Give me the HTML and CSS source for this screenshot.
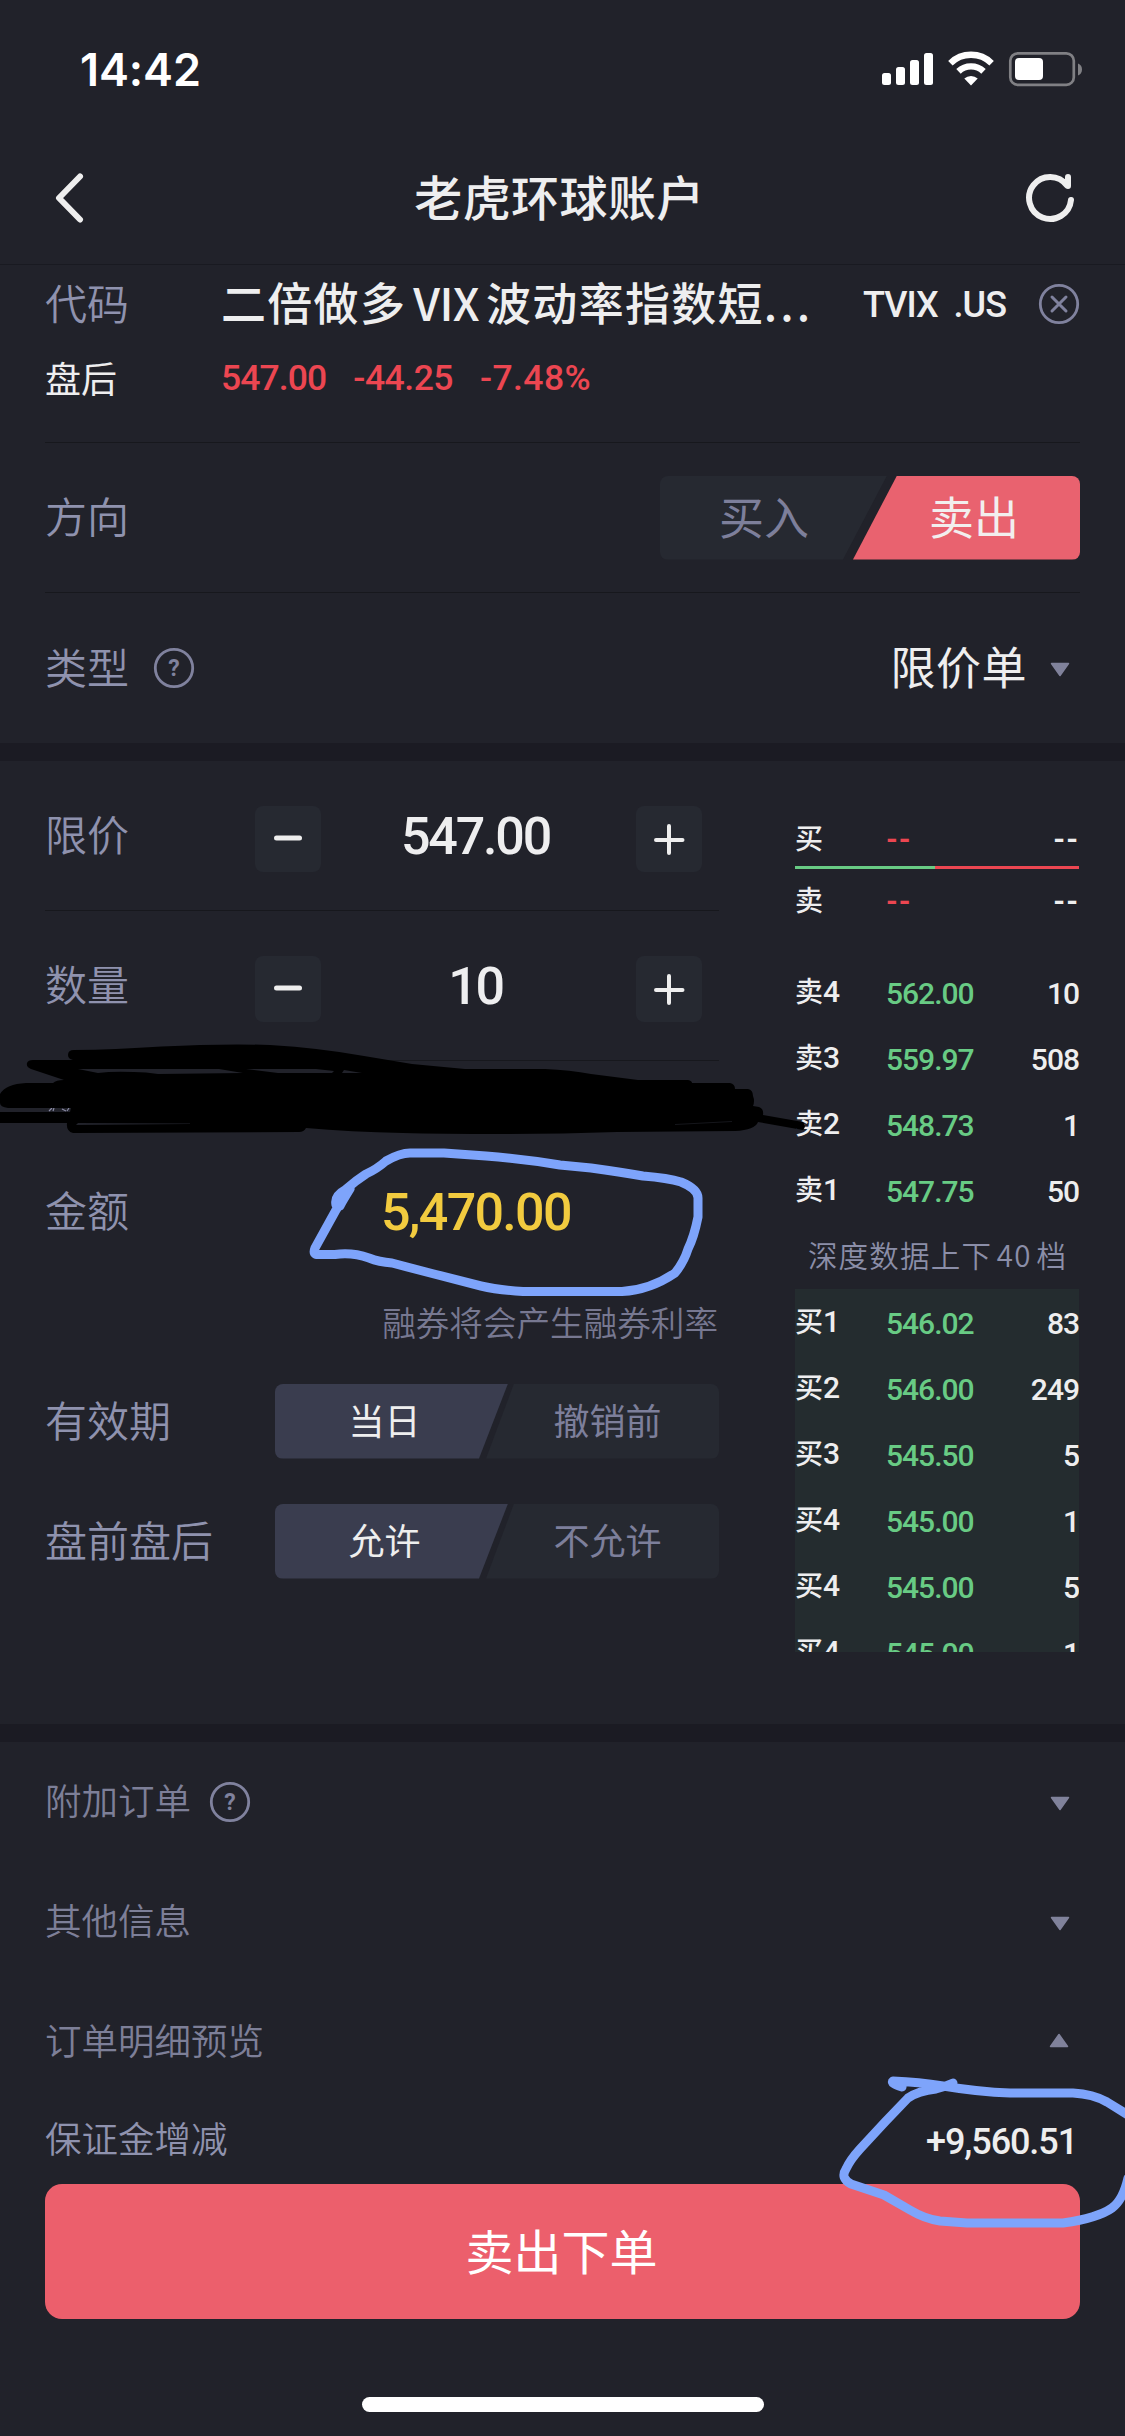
FILE: index.html
```html
<!DOCTYPE html>
<html lang="zh-CN">
<head>
<meta charset="utf-8">
<title>老虎环球账户</title>
<link rel="stylesheet" href="styles.css">
</head>
<body>
<div class="screen">
  <div class="status">
    <span class="time">14:42</span>
    <svg class="status-icons" width="202" height="36" viewBox="0 0 202 36">
      <g fill="#fff">
        <rect x="2" y="22" width="9" height="12" rx="2.5"/>
        <rect x="16" y="16" width="9" height="18" rx="2.5"/>
        <rect x="30" y="9" width="9" height="25" rx="2.5"/>
        <rect x="44" y="2" width="9" height="32" rx="2.5"/>
      </g>
      <g fill="none" stroke="#fff" stroke-width="6.4">
        <path d="M70.4 12.2A29.5 29.5 0 0 1 111.600 12.200"/>
        <path d="M78.500 20.400A18 18 0 0 1 103.500 20.400"/>
      </g>
      <path d="M91 34.500L84.300 27.600A9.600 9.600 0 0 1 97.700 27.600Z" fill="#fff"/>
      <rect x="130.300" y="2.300" width="63.500" height="31.500" rx="7.500" fill="none" stroke="#808084" stroke-width="2.700"/>
      <path d="M198 12.500a6.500 6.500 0 0 1 0 12Z" fill="#808084"/>
      <rect x="135" y="7" width="28" height="22" rx="4" fill="#fff"/>
    </svg>
  </div>
  <div class="header">
    <svg class="back" width="32" height="50" viewBox="0 0 32 50"><path d="M26 3.500L5 25L26 46.500"/></svg>
    <h1 class="zh">老虎环球账户</h1>
    <svg class="refresh" width="50" height="50" viewBox="0 0 50 50"><path d="M46 27A21 21 0 1 1 42 12.500M43 4V13"/></svg>
  </div>

  <div class="block">
    <div class="row code-row">
      <span class="label zh">代码</span>
      <span class="name zh">二倍做多 <em>VIX</em> 波动率指数短<span class="dots">...</span></span>
      <span class="num ticker">TVIX&nbsp; .US</span>
      <svg class="clear" width="42" height="42" viewBox="0 0 42 42"><circle cx="21" cy="21" r="18.700"/><path d="M14 14L28 28M28 14L14 28"/></svg>
    </div>
    <div class="row quote-row">
      <span class="session zh">盘后</span>
      <span class="num change">547.00</span><span class="num change c2">-44.25</span><span class="num change c3">-7.48%</span>
    </div>
    <div class="row line side-row">
      <span class="label zh">方向</span>
      <div class="seg side">
        <span class="opt first"><span class="zh">买入</span></span>
        <span class="opt last on"><span class="zh">卖出</span></span>
      </div>
    </div>
    <div class="row line type-row">
      <span class="label zh">类型</span>
      <svg class="help" width="42" height="42" viewBox="0 0 42 42"><circle cx="21" cy="21" r="18.700"/><text x="21" y="29" text-anchor="middle">?</text></svg>
      <span class="value zh">限价单</span>
      <svg class="tri" width="20" height="15" viewBox="0 0 20 15"><path d="M1.500 1.500H18.500L10 13.500Z"/></svg>
    </div>
  </div>

  <div class="trade">
    <div class="form">
      <div class="field">
        <span class="label zh">限价</span>
        <div class="stepper">
          <span class="btn"><svg width="32" height="32" viewBox="0 0 32 32"><path d="M4.500 15H27.500"/></svg></span>
          <span class="num big">547.00</span>
          <span class="btn"><svg width="32" height="32" viewBox="0 0 32 32"><path d="M3 17H29.500M16 3V30" class="thin"/></svg></span>
        </div>
      </div>
      <div class="field line">
        <span class="label zh">数量</span>
        <div class="stepper">
          <span class="btn"><svg width="32" height="32" viewBox="0 0 32 32"><path d="M4.500 15H27.500"/></svg></span>
          <span class="num big">10</span>
          <span class="btn"><svg width="32" height="32" viewBox="0 0 32 32"><path d="M3 17H29.500M16 3V30" class="thin"/></svg></span>
        </div>
      </div>
      <div class="field line spacer"></div>
      <div class="field amount"><span class="label zh">金额</span><span class="num big total">5,470.00</span></div>
      <div class="hint"><span class="zh">融券将会产生融券利率</span></div>
      <div class="field opts">
        <span class="label zh">有效期</span>
        <div class="seg small">
          <span class="opt first on"><span class="zh">当日</span></span>
          <span class="opt last"><span class="zh">撤销前</span></span>
        </div>
      </div>
      <div class="field opts">
        <span class="label zh">盘前盘后</span>
        <div class="seg small">
          <span class="opt first on"><span class="zh">允许</span></span>
          <span class="opt last"><span class="zh">不允许</span></span>
        </div>
      </div>
    </div>

    <div class="book">
      <div class="level best"><span class="tag zh">买</span><span class="dash red">--</span><span class="dash qty">--</span></div>
      <div class="ratio"><i></i><i></i></div>
      <div class="level best ask"><span class="tag zh">卖</span><span class="dash red">--</span><span class="dash qty">--</span></div>
      <div class="asks">
        <div class="level"><span class="tag zh">卖<b>4</b></span><span class="num">562.00</span><span class="num qty">10</span></div>
        <div class="level"><span class="tag zh">卖<b>3</b></span><span class="num">559.97</span><span class="num qty">508</span></div>
        <div class="level"><span class="tag zh">卖<b>2</b></span><span class="num">548.73</span><span class="num qty">1</span></div>
        <div class="level"><span class="tag zh">卖<b>1</b></span><span class="num">547.75</span><span class="num qty">50</span></div>
      </div>
      <div class="depth"><span class="zh">深度数据上下 40 档</span></div>
      <div class="bids">
        <div class="level"><span class="tag zh">买<b>1</b></span><span class="num">546.02</span><span class="num qty">83</span></div>
        <div class="level"><span class="tag zh">买<b>2</b></span><span class="num">546.00</span><span class="num qty">249</span></div>
        <div class="level"><span class="tag zh">买<b>3</b></span><span class="num">545.50</span><span class="num qty">5</span></div>
        <div class="level"><span class="tag zh">买<b>4</b></span><span class="num">545.00</span><span class="num qty">1</span></div>
        <div class="level"><span class="tag zh">买<b>4</b></span><span class="num">545.00</span><span class="num qty">5</span></div>
        <div class="level"><span class="tag zh">买<b>4</b></span><span class="num">545.00</span><span class="num qty">1</span></div>
      </div>
    </div>
  </div>

  <div class="extras">
    <div class="fold"><span class="zh">附加订单</span>
      <svg class="help" width="42" height="42" viewBox="0 0 42 42"><circle cx="21" cy="21" r="18.700"/><text x="21" y="29" text-anchor="middle">?</text></svg>
      <svg class="tri" width="20" height="15" viewBox="0 0 20 15"><path d="M1.500 1.500H18.500L10 13.500Z"/></svg></div>
    <div class="fold"><span class="zh">其他信息</span><svg class="tri" width="20" height="15" viewBox="0 0 20 15"><path d="M1.500 1.500H18.500L10 13.500Z"/></svg></div>
    <div class="fold"><span class="zh">订单明细预览</span><svg class="tri up" width="20" height="15" viewBox="0 0 20 15"><path d="M1.500 13.500H18.500L10 1.500Z"/></svg></div>
    <div class="margin-row"><span class="zh">保证金增减</span><span class="num">+9,560.51</span></div>
  </div>
  <div class="submit"><span class="zh">卖出下单</span></div>
  <div class="home"></div>

  <svg class="ink" width="1125" height="2436" viewBox="0 0 1125 2436">
    <path d="M49 1111l3-3M53 1111l1-3M62 1109l4 2M69 1108l-2 3" stroke="#8b8ca6" stroke-width="1.200" fill="none"/>
    <path fill="#000" d="M74 1050Q95 1050 116 1049Q165 1046 200 1045Q240 1044 270 1045Q320 1048 364 1056L412 1064L465 1069L545 1069Q570 1070 591 1074L638 1080L688 1080Q692 1081 692 1083L730 1083Q735 1084 735 1089L748 1089Q753 1090 753 1096Q755 1101 753 1106L759 1107Q764 1109 763 1115L803 1122Q807 1126 803 1130L758 1122Q755 1130 735 1131L617 1132Q560 1134 502 1134Q440 1134 403 1133Q350 1132 306 1128Q304 1132 299 1132L73 1133Q66 1131 67 1123L0 1123V1112L70 1112L71 1108L8 1108Q0 1107 0 1103V1094Q6 1084 26 1083L53 1083Q56 1080 64 1080L31 1069Q26 1067 27 1063Q28 1060 33 1060L73 1060Q68 1059 68 1055Q68 1050 74 1050Z"/>
    <path fill="#21222a" d="M78 1069L219 1069L243 1073L158 1074Q146 1072 134 1072Q113 1071 98 1073ZM246 1069L316 1069L334 1071L332 1073L278 1073ZM344 1070L362 1073L342 1073ZM78 1123L190 1123.500L190 1124L76 1125Z"/>
    <path d="M675 1124.500L732 1121.500" stroke="#15161b" fill="none"/>
    <g fill="none" stroke="#7ea4fb" stroke-width="9" stroke-linecap="round" stroke-linejoin="round">
      <path d="M336 1205Q334 1196 345 1190L356 1181L366 1174Q377 1169 386 1161Q400 1153 410 1153L444 1153L486 1156Q525 1159 560 1165L591 1168Q620 1172 643 1176Q668 1178 681 1182Q698 1189 698 1198L698 1217Q694 1237 688 1249Q684 1262 675 1273Q650 1290 622 1291.500L523 1291.500Q498 1290 481 1286L434 1274L392 1263Q379 1262 369 1258Q352 1252 335 1254.500L316 1254.500Q313 1253 315 1248L336 1210L350 1189Q342 1202 340 1206"/>
      <path d="M902 2087Q890 2083 893 2081Q919 2082 943 2086Q979 2092 1010 2093L1073 2093Q1093 2094 1107 2102L1128 2115M1128 2178Q1123 2200 1112 2208Q1098 2218 1063 2223L967 2223L940 2221Q925 2219 910 2210L884 2195L851 2184Q840 2178 846 2169Q850 2160 860 2149L885 2122L908 2098Q918 2091 936 2089Q944 2087 953 2083"/>
    </g>
  </svg>
</div>
</body>
</html>
```
FILE: styles.css
```css
* { box-sizing: border-box; }
body {
  margin: 0;
  background: #21222a;
  color: #eeeeef;
  font-family: "Noto Sans CJK SC", sans-serif;
}
.screen {
  position: relative;
  width: 1125px;
  height: 2436px;
  overflow: hidden;
  line-height: 1;
  white-space: nowrap;
}
svg { display: block; flex: none; }
/* optical centring of CJK glyphs inside flex rows */
.zh { margin-top: -0.11em; }
.num { font-family: Roboto, sans-serif; font-weight: 500; }

.status {
  display: flex;
  align-items: center;
  justify-content: space-between;
  height: 138px;
  padding: 0 43px 0 80px;
}
.time { font: 600 45px/1 Inter, sans-serif; color: #fff; letter-spacing: -0.1px; }

.header {
  display: flex;
  align-items: center;
  justify-content: space-between;
  height: 127px;
  padding: 0 50px 6px 54px;
  border-bottom: 1px solid #191a21;
}
.header h1 { font-size: 48px; font-weight: 500; letter-spacing: 0.4px; margin-bottom: 0; margin-left: 8px; }
.back path, .refresh path {
  fill: none; stroke: #eee; stroke-width: 6;
  stroke-linecap: round; stroke-linejoin: round;
}

.row { display: flex; align-items: center; margin: 0 45px; }
.label { font-size: 42px; font-weight: 350; color: #8f92ae; }
.line { border-top: 1px solid #17181d; }
.code-row { height: 78px; }
.name { width: 600px; margin-left: 92px; font-size: 45px; font-weight: 500; letter-spacing: 1.3px; word-spacing: -4.5px; }
.name em { font-style: normal; letter-spacing: -0.5px; }
.name .dots { letter-spacing: 3px; }
.ticker { width: 160px; margin-left: 42px; font-size: 36px; font-weight: 500; letter-spacing: -1px; padding-top: 2px; }
.clear { margin-left: auto; }
.clear circle, .help circle { fill: none; stroke: #80829e; stroke-width: 2.8; }
.clear path { stroke: #80829e; stroke-width: 3; stroke-linecap: round; }
.help text { fill: #80829e; font: 700 23px Roboto, sans-serif; }
.quote-row { height: 99px; padding-bottom: 27px; }
.session { font-size: 36px; width: 176px; }
.change { color: #ec4651; font-size: 35.5px; letter-spacing: -0.9px; }
.c2 { margin-left: 27px; letter-spacing: -0.5px; }
.c3 { margin-left: 27px; letter-spacing: 0.4px; }
.side-row { height: 150px; }
.type-row { height: 151px; }
.type-row .help { margin-left: 24px; }
.type-row .value { margin-left: auto; font-size: 45px; letter-spacing: 0.5px; }
.type-row .tri { margin: 3px 10px 0 23px; }
.tri path { fill: #80829b; stroke: #80829b; stroke-width: 1.5; stroke-linejoin: round; }

.seg { display: flex; margin-left: auto; color: #7d7f9b; }
.opt { display: flex; align-items: center; justify-content: center; background: #262931; }
.side { width: 420px; height: 84px; font-size: 45px; }
.side .first { width: 227px; padding-right: 19px; border-radius: 8px 0 0 8px; clip-path: polygon(0 0, 100% 0, 183px 100%, 0 100%); }
.side .last { width: 227px; margin-left: -34px; padding-left: 15px; border-radius: 0 8px 8px 0; clip-path: polygon(44px 0, 100% 0, 100% 100%, 0 100%); }
.side .on { background: #e9626f; color: #f2eeee; }
.small { width: 444px; height: 75px; font-size: 36px; }
.small .first { width: 233px; padding-right: 14px; border-radius: 8px 0 0 8px; clip-path: polygon(0 0, 100% 0, 204px 100%, 0 100%); }
.small .last { width: 233px; margin-left: -22px; padding-left: 10px; border-radius: 0 8px 8px 0; clip-path: polygon(28px 0, 100% 0, 100% 100%, 0 100%); }
.small .on { background: #3a3d4f; color: #eee; }

.trade {
  display: flex;
  justify-content: space-between;
  height: 999px;
  padding: 0 45px;
  border-top: 18px solid #1b1b23;
  border-bottom: 18px solid #1b1b23;
}
.form { width: 674px; }
.field { display: flex; align-items: center; height: 150px; }
.form .field:first-child { height: 149px; }
.stepper { display: flex; align-items: center; justify-content: space-between; width: 447px; margin: 0 17px 0 auto; }
.btn { display: flex; align-items: center; justify-content: center; width: 66px; height: 66px; margin-top: 7px; border-radius: 8px; background: #262931; }
.btn path { fill: none; stroke: #eee; stroke-width: 5; stroke-linecap: round; }
.btn .thin { stroke-width: 4; }
.big { padding-top: 3px; font-size: 52px; letter-spacing: -2.2px; }
.stepper .big { margin-right: 6px; }
.form .spacer { height: 76px; }
.form .amount .label { width: 336px; }
.form .total { color: #f2cb3f; letter-spacing: -1.7px; }
.hint { display: flex; align-items: center; justify-content: flex-end; height: 75px; padding-right: 1px; font-size: 33.600px; font-weight: 350; color: #777891; }
.form .opts { height: 120px; }

.book { width: 285px; padding-top: 49px; }
.level { display: flex; align-items: center; height: 66px; padding-right: 1px; font-size: 30px; }
.tag { width: 91px; padding-top: 1px; font-size: 28px; font-weight: 500; }
.tag b { font: 500 30px/1 Roboto, sans-serif; }
.level .num { padding-top: 2px; letter-spacing: -1px; color: #68cb84; }
.level .qty { margin-left: auto; color: #eee; }
.best { height: 56px; }
.ask { height: 62px; }
.dash { padding-top: 2px; font: 700 30px/1 Roboto, sans-serif; letter-spacing: 1px; }
.dash.red { color: #ec4651; }
.ratio { display: grid; grid-template-columns: 140px 1fr; height: 3px; margin-right: 1px; }
.ratio i { background: #68cb84; }
.ratio i + i { background: #ec4651; }
.asks { margin-top: 29px; }
.depth { display: flex; align-items: center; justify-content: center; height: 65px; font-size: 29.500px; font-weight: 350; letter-spacing: 1.2px; word-spacing: -3px; color: #8b8ea8; }
.bids { height: 363px; margin-right: 1px; padding-top: 1px; overflow: hidden; background: #242c2f; }
.bids .level { padding-right: 0; }

.fold, .margin-row { display: flex; align-items: center; height: 120px; padding: 0 55px 0 45px; font-size: 36.500px; font-weight: 350; color: #7d7f98; }
.fold .help { margin-left: 18px; }
.fold .tri { margin: 3px 0 0 auto; }
.fold .up { margin: -4px 1px 0 auto; }
.margin-row { height: 82px; padding: 0 48px 6px 45px; justify-content: space-between; color: #8f92ae; }
.margin-row .num { padding-top: 3px; color: #eee; font-size: 36px; letter-spacing: -1.1px; }
.submit {
  display: flex;
  align-items: center;
  justify-content: center;
  height: 135px;
  margin: 0 45px;
  padding-right: 2px;
  border-radius: 17px;
  background: #ec5f6c;
  color: #fff;
  font-size: 48px;
}
.home { width: 402px; height: 15px; margin: 78px auto 0; border-radius: 8px; background: #fff; }
.ink { position: absolute; left: 0; top: 0; }
```
